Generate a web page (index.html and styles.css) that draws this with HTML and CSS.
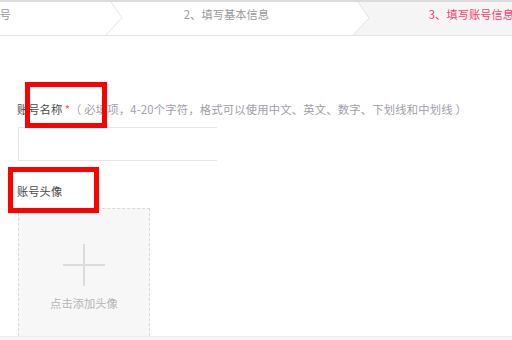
FILE: index.html
```html
<!DOCTYPE html>
<html lang="zh-CN">
<head>
<meta charset="utf-8">
<title>填写账号信息</title>
<link rel="stylesheet" href="styles.css">
</head>
<body>
<div class="steps">
  <div class="steps-row">
    <div class="step">
      <span>1、注册账号</span>
      <svg class="chev" width="18" height="33" viewBox="0 0 18 33"><polygon points="0,0 5,0 16,16 0,33" fill="#fff"/><polyline points="5,0 16,16 0,33" fill="none" stroke="#e4e4e4" stroke-width="1"/></svg>
    </div>
    <div class="step">
      <span>2、填写基本信息</span>
      <svg class="chev" width="18" height="33" viewBox="0 0 18 33"><polygon points="0,0 5,0 16,16 0,33" fill="#fff"/><polyline points="5,0 16,16 0,33" fill="none" stroke="#e4e4e4" stroke-width="1"/></svg>
    </div>
    <div class="step active">
      <span>3、填写账号信息</span>
    </div>
  </div>
</div>

<div class="form">
  <div class="label">账号名称 <span class="req">*</span><span class="hint">（ 必填项，4-20个字符，格式可以使用中文、英文、数字、下划线和中划线 ）</span></div>
  <div class="input"></div>
  <div class="label label-2">账号头像</div>
  <div class="upload">
    <div class="plus"></div>
    <div class="upload-text">点击添加头像</div>
  </div>
</div>
<div class="footer"></div>

<div class="mark mark-1"></div>
<div class="mark mark-2"></div>
</body>
</html>
```

FILE: styles.css
```css
html, body {
  margin: 0;
  padding: 0;
  background: #fff;
  font-family: "Noto Sans CJK SC", "Microsoft YaHei", sans-serif;
  font-size: 11.3px;
  color: #555;
  overflow: hidden;
}

.steps {
  border-top: 2px solid #dcdcdc;
  border-bottom: 1px solid #e4e4e4;
  height: 33px;
  overflow: hidden;
}

.steps-row {
  display: flex;
  margin-left: -141px;
  height: 33px;
}

.step {
  flex: 0 0 247px;
  position: relative;
  box-sizing: border-box;
  padding: 4px 6px 0 0;
  text-align: center;
  line-height: 16px;
  color: #9a9a9a;
  white-space: nowrap;
}

.step.active {
  background: #f5f5f5;
  color: #ff3d6d;
  padding-right: 10px;
}

.chev {
  position: absolute;
  top: 0;
  right: -18px;
  z-index: 2;
  display: block;
}

.form {
  padding: 65px 0 0 17px;
}

.label {
  line-height: 16px;
  color: #4a4a4a;
  white-space: nowrap;
}

.req {
  color: #ff4d6d;
}

.hint {
  color: #a0a0a8;
  letter-spacing: 0.2px;
}

.input {
  margin: 10px 0 0 1px;
  width: 199px;
  height: 34px;
  box-sizing: border-box;
  border: 1px solid #e6e6e6;
  border-right: none;
}

.label-2 {
  margin-top: 22px;
}

.upload {
  margin: 9px 0 0 1px;
  width: 132px;
  height: 128px;
  box-sizing: border-box;
  border: 1px dashed #dadada;
  border-bottom: none;
  background: #f7f7f7;
  display: flex;
  flex-direction: column;
  align-items: center;
  padding-top: 35px;
}

.plus {
  width: 42px;
  height: 42px;
  background:
    linear-gradient(#dcdcdc, #dcdcdc) center / 42px 2px no-repeat,
    linear-gradient(#dcdcdc, #dcdcdc) center / 2px 42px no-repeat;
}

.upload-text {
  margin-top: 9px;
  color: #b5b5b5;
  line-height: 16px;
}

.footer {
  border-top: 1px solid #ececec;
  background: #f7f7f7;
  height: 10px;
}

.mark {
  position: absolute;
  box-sizing: border-box;
  border: 5px solid #f00;
}

.mark-1 {
  left: 25px;
  top: 82px;
  width: 82px;
  height: 46px;
}

.mark-2 {
  left: 8px;
  top: 167px;
  width: 91px;
  height: 46px;
}
```
